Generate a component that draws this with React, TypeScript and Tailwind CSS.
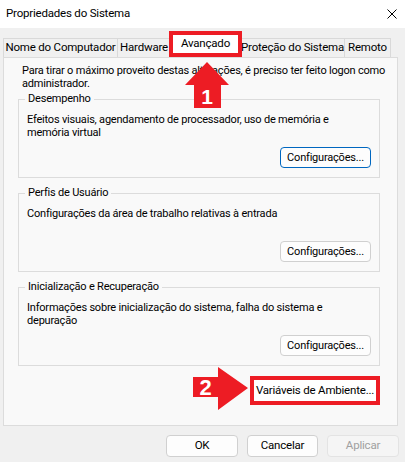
import React from 'react';

const RED = '#ed1c24';

const WinButton: React.FC<{ label: string; className?: string; primary?: boolean; disabled?: boolean }> = ({
  label,
  className = '',
  primary,
  disabled,
}) => (
  <button
    className={
      'h-[21px] rounded-[4px] border leading-none whitespace-nowrap flex items-center justify-center ' +
      (primary
        ? 'border-[#0067c0] bg-[#fdfdfd] text-black '
        : disabled
        ? 'border-[#e3e3e3] bg-[#f5f5f5] text-[#a0a0a0] '
        : 'border-[#d0d0d0] bg-[#fdfdfd] text-black ') +
      className
    }
  >
    {label}
  </button>
);

interface GroupProps {
  title: string;
  text: React.ReactNode;
  primary?: boolean;
}

const GroupBox: React.FC<GroupProps> = ({ title, text, primary }) => (
  <div className="relative w-[362px] h-[79px] border border-[#dcdcdc] flex flex-col pt-[13px] pb-[9px] px-[8px]">
    <span className="absolute -top-[8px] left-[6px] px-[3px] bg-[#f9f9f9] leading-[14px]">{title}</span>
    <p className="leading-[13px] whitespace-nowrap">{text}</p>
    <WinButton label="Configurações..." primary={primary} className="mt-auto self-end w-[91px]" />
  </div>
);

const tabs = [
  { label: 'Nome do Computador', w: 'w-[115px]' },
  { label: 'Hardware', w: 'w-[54px]' },
  { label: 'Avançado', w: 'w-[71px]', active: true },
  { label: 'Proteção do Sistema', w: 'w-[105px]' },
  { label: 'Remoto', w: 'w-[47px]' },
];

export default function App() {
  return (
    <div className="relative w-[405px] h-[462px] bg-[#f0f0f0] font-[Roboto] text-[11px] tracking-[-0.2px] text-black overflow-hidden">
      {/* title bar */}
      <div className="h-[28px] bg-white flex items-center justify-between pl-[6px] pr-[8px]">
        <span className="text-[11.5px]">Propriedades do Sistema</span>
        <svg width="10" height="10" viewBox="0 0 10 10">
          <path d="M0.5 0.5 L9.5 9.5 M9.5 0.5 L0.5 9.5" stroke="#000" strokeWidth="1" fill="none" />
        </svg>
      </div>

      {/* tabs */}
      <div className="flex ml-[3px] mt-[10px] h-[19px] text-[11.5px]">
        {tabs.map((t) =>
          t.active ? (
            <div key={t.label} className={`relative ${t.w} h-full -mr-px`}>
              {/* selected tab, boxed in red */}
              <div
                className="absolute -left-px -right-px -top-[7px] bottom-0 border-4 flex items-center justify-center bg-white z-10 whitespace-nowrap"
                style={{ borderColor: RED }}
              >
                {t.label}
              </div>
            </div>
          ) : (
            <div
              key={t.label}
              className={`${t.w} h-full flex items-center justify-center whitespace-nowrap border-t border-l border-r border-[#d9d9d9] -mr-px`}
            >
              {t.label}
            </div>
          )
        )}
      </div>

      {/* panel */}
      <div className="ml-[3px] w-[395px] h-[369px] bg-[#f9f9f9] border border-[#dcdcdc] pt-[6px] pl-[14px]">
        <p className="pl-[4px] leading-[13px] whitespace-nowrap">
          Para tirar o máximo proveito destas alterações, é preciso ter feito logon como
          <br />
          administrador.
        </p>
        <div className="mt-[9px] flex flex-col gap-[15px]">
          <GroupBox
            title="Desempenho"
            primary
            text={
              <>
                Efeitos visuais, agendamento de processador, uso de memória e
                <br />
                memória virtual
              </>
            }
          />
          <GroupBox title="Perfis de Usuário" text="Configurações da área de trabalho relativas à entrada" />
          <GroupBox
            title="Inicialização e Recuperação"
            text={
              <>
                Informações sobre inicialização do sistema, falha do sistema e
                <br />
                depuração
              </>
            }
          />
        </div>
        <div className="w-[362px] flex justify-end mt-[10px]">
          <div className="border-4 bg-white" style={{ borderColor: RED }}>
            <div className="w-[122px] h-[21px] flex items-center justify-center bg-white whitespace-nowrap text-[11.5px]">
              Variáveis de Ambiente...
            </div>
          </div>
        </div>
      </div>

      {/* footer buttons */}
      <div className="flex justify-end gap-[9px] pr-[6px] mt-[9px] text-[11.5px]">
        <WinButton label="OK" className="w-[72px] h-[22px]" />
        <WinButton label="Cancelar" className="w-[71px] h-[22px]" />
        <WinButton label="Aplicar" disabled className="w-[72px] h-[22px]" />
      </div>

      {/* annotation arrow 1 */}
      <div className="absolute left-[184px] top-[61px] w-[46px] h-[48px]">
        <svg width="46" height="48" viewBox="0 0 46 48">
          <polygon points="23,1 45,24 37,24 37,47 10,47 10,24 1,24" fill={RED} />
        </svg>
        <span className="absolute left-0 right-0 top-[24px] text-center text-white font-['Liberation_Sans',sans-serif] font-bold text-[21px] leading-[24px] tracking-normal">
          1
        </span>
      </div>

      {/* annotation arrow 2 */}
      <div className="absolute left-[192px] top-[366px] w-[58px] h-[45px]">
        <svg width="58" height="45" viewBox="0 0 58 45">
          <polygon points="1,11 26,11 26,1 56,22 26,44 26,31 1,31" fill={RED} />
        </svg>
        <span className="absolute left-[1px] w-[25px] top-[10px] text-center text-white font-['Liberation_Sans',sans-serif] font-bold text-[22px] leading-[24px] tracking-normal">
          2
        </span>
      </div>
    </div>
  );
}
